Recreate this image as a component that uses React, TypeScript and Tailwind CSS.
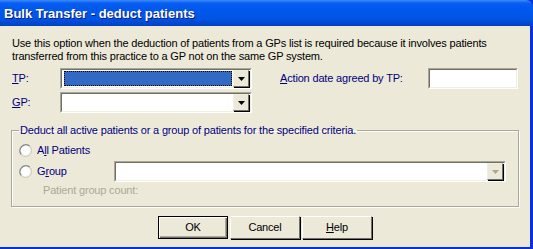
import React from "react";

const font = "font-['Liberation_Sans',Arial,sans-serif]";

function Arrow({ disabled }: { disabled?: boolean }) {
  return (
    <svg width="7" height="4" viewBox="0 0 7 4">
      <path d="M0 0h7L3.5 4z" fill={disabled ? "#ACA899" : "#000"} />
    </svg>
  );
}

function DropButton({ disabled }: { disabled?: boolean }) {
  return (
    <div className="flex h-[17px] w-[16px] items-center justify-center border border-t-[#F1EFE2] border-l-[#F1EFE2] border-r-[#716F64] border-b-[#716F64] bg-[#ECE9D8] shadow-[1px_1px_0_#000]">
      <Arrow disabled={disabled} />
    </div>
  );
}

function Combo({
  width,
  selected,
  disabled,
}: {
  width: string;
  selected?: boolean;
  disabled?: boolean;
}) {
  return (
    <div
      className={`${width} h-[21px] border border-t-[#ACA899] border-l-[#ACA899] border-r-white border-b-white`}
    >
      <div className="flex h-full items-center gap-[1px] border border-t-[#716F64] border-l-[#716F64] border-r-[#F1EFE2] border-b-[#F1EFE2] bg-white pl-[2px] pr-[1px]">
        <div className="flex-1 self-stretch py-[1px]">
          {selected && (
            <div className="h-full border border-dotted border-black bg-[#316AC5]" />
          )}
        </div>
        <DropButton disabled={disabled} />
      </div>
    </div>
  );
}

function Radio() {
  return (
    <svg width="13" height="13" viewBox="0 0 13 13">
      <circle cx="6.5" cy="6.5" r="6" fill="#F4F3EE" stroke="#C9C7BA" />
      <path d="M2.2 10.4A6 6 0 0 1 10.6 2" fill="none" stroke="#808080" strokeWidth="1.2" />
      <circle cx="6.5" cy="6.5" r="4.4" fill="#fff" />
    </svg>
  );
}

function Btn({ children, def }: { children: React.ReactNode; def?: boolean }) {
  return (
    <button
      className={`flex h-[23px] w-[70px] items-center justify-center bg-[#ECE9D8] text-[11px] text-black ${
        def
          ? "border border-black shadow-[inset_1px_1px_0_#fff,inset_-1px_-1px_0_#716F64,inset_-2px_-2px_0_#ACA899]"
          : "border border-t-white border-l-white border-r-[#716F64] border-b-[#716F64] shadow-[1px_1px_0_#000]"
      }`}
    >
      {children}
    </button>
  );
}

export default function App() {
  return (
    <div className={`flex h-[249px] w-[533px] flex-col overflow-hidden bg-[#0831D9] ${font}`}>
      <div className="flex h-[26px] shrink-0 items-center rounded-tr-[7px] bg-[linear-gradient(to_bottom,#3D8DFF_0px,#0A5EF0_3px,#0058EE_8px,#0055E5_18px,#0049D2_23px,#0040C4_26px)] pl-[4px] pt-[1px] text-[13px] font-bold text-white [text-shadow:1px_1px_0_#0A1A80]">
        Bulk Transfer - deduct patients
      </div>
      <div className="flex flex-1">
        <div className="mb-[2px] flex w-[530px] flex-col bg-[#ECE9D8] text-[11px] leading-[13px] tracking-[-0.17px]">
          <p className="mt-[11px] whitespace-nowrap pl-[12px] text-black">
            Use this option when the deduction of patients from a GPs list is required because it involves patients
            <br />
            transferred from this practice to a GP not on the same GP system.
          </p>

          <div className="mt-[5px] flex pl-[12px]">
            <div className="flex flex-col gap-[3px]">
              <div className="flex items-center">
                <span className="w-[48px] text-[#000080]">
                  <u>T</u>P:
                </span>
                <Combo width="w-[192px]" selected />
              </div>
              <div className="flex items-center">
                <span className="w-[48px] text-[#000080]">
                  <u>G</u>P:
                </span>
                <Combo width="w-[192px]" />
              </div>
            </div>
            <div className="ml-[28px] flex h-[21px] items-center">
              <span className="w-[148px] text-[#000080]">
                <u>A</u>ction date agreed by TP:
              </span>
              <div className="h-[21px] w-[90px] border border-t-[#ACA899] border-l-[#ACA899] border-r-white border-b-white">
                <div className="h-full border border-t-[#716F64] border-l-[#716F64] border-r-[#F1EFE2] border-b-[#F1EFE2] bg-white" />
              </div>
            </div>
          </div>

          <fieldset className="mx-[11px] mt-[11px] h-[83px] border border-[#ACA899] px-[7px] shadow-[1px_1px_0_#fff,inset_1px_1px_0_#fff]">
            <legend className="px-[1px] text-[#000080]">
              Deduct all active patients or a group of patients for the specified criteria.
            </legend>
            <div className="mt-[7px] flex items-center gap-[5px]">
              <Radio />
              <span className="text-[#000080]">
                A<u>l</u>l Patients
              </span>
            </div>
            <div className="mt-[4px] flex items-center">
              <div className="flex w-[95px] items-center gap-[5px]">
                <Radio />
                <span className="text-[#000080]">
                  G<u>r</u>oup
                </span>
              </div>
              <Combo width="w-[392px]" disabled />
            </div>
            <div className="mt-[2px] pl-[24px] text-[#ACA899]">Patient group count:</div>
          </fieldset>

          <div className="mt-[9px] flex justify-center gap-[2px]">
            <Btn def>OK</Btn>
            <Btn>Cancel</Btn>
            <Btn>
              <u>H</u>elp
            </Btn>
          </div>
        </div>
      </div>
    </div>
  );
}
